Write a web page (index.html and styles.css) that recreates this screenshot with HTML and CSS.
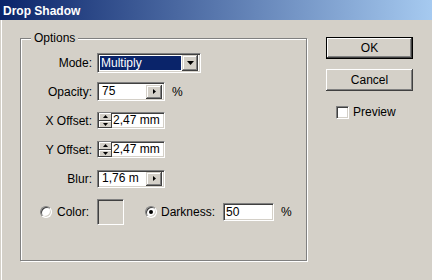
FILE: index.html
```html
<!DOCTYPE html>
<html lang="en">

<head>
    <meta charset="UTF-8">
    <meta name="viewport" content="width=device-width, initial-scale=1.0">
    <title>Drop Shadow</title>
    <link rel="stylesheet" href="styles.css">
</head>

<body>
    <div class="window">
        <div class="titlebar">Drop Shadow</div>
        <div class="content">
            <fieldset class="options">
                <legend>Options</legend>

                <div class="row">
                    <span class="lbl">Mode:</span>
                    <div class="field select">
                        <span class="select-value">Multiply</span>
                        <span class="raised drop-btn">
                            <svg width="7" height="4" viewBox="0 0 7 4"><polygon points="0,0 7,0 3.5,4" fill="#000"/></svg>
                        </span>
                    </div>
                </div>

                <div class="row">
                    <span class="lbl">Opacity:</span>
                    <div class="field arrow-field">
                        <span class="value">75</span>
                        <span class="raised side-btn">
                            <svg width="3" height="5" viewBox="0 0 3 5"><polygon points="0,0 3,2.5 0,5" fill="#000"/></svg>
                        </span>
                    </div>
                    <span class="unit">%</span>
                </div>

                <div class="row">
                    <span class="lbl">X Offset:</span>
                    <div class="field spin-field">
                        <span class="spin">
                            <span class="raised spin-btn"><svg width="5" height="3" viewBox="0 0 5 3"><polygon points="2.5,0 5,3 0,3" fill="#000"/></svg></span>
                            <span class="raised spin-btn"><svg width="5" height="3" viewBox="0 0 5 3"><polygon points="0,0 5,0 2.5,3" fill="#000"/></svg></span>
                        </span>
                        <span class="value">2,47 mm</span>
                    </div>
                </div>

                <div class="row">
                    <span class="lbl">Y Offset:</span>
                    <div class="field spin-field">
                        <span class="spin">
                            <span class="raised spin-btn"><svg width="5" height="3" viewBox="0 0 5 3"><polygon points="2.5,0 5,3 0,3" fill="#000"/></svg></span>
                            <span class="raised spin-btn"><svg width="5" height="3" viewBox="0 0 5 3"><polygon points="0,0 5,0 2.5,3" fill="#000"/></svg></span>
                        </span>
                        <span class="value">2,47 mm</span>
                    </div>
                </div>

                <div class="row">
                    <span class="lbl">Blur:</span>
                    <div class="field arrow-field blur">
                        <span class="value">1,76 m</span>
                        <span class="raised side-btn">
                            <svg width="3" height="5" viewBox="0 0 3 5"><polygon points="0,0 3,2.5 0,5" fill="#000"/></svg>
                        </span>
                    </div>
                </div>

                <div class="row color-row">
                    <span class="lbl radio-lbl"><span class="radio"></span>Color:</span>
                    <div class="field swatch"></div>
                    <span class="radio-lbl darkness"><span class="radio checked"></span>Darkness:</span>
                    <div class="field dark-field"><span class="value">50</span></div>
                    <span class="unit">%</span>
                </div>
            </fieldset>

            <div class="actions">
                <button class="push default">OK</button>
                <button class="push">Cancel</button>
                <label class="check"><span class="checkbox"></span>Preview</label>
            </div>
        </div>
    </div>
</body>

</html>
```

FILE: styles.css
```css
body {
    margin: 0;
    padding: 0;
    background-color: #d4d0c8;
    font-family: "Liberation Sans", Arial, sans-serif;
    font-size: 12px;
    color: #000;
}

.window {
    width: 432px;
    height: 280px;
    background-color: #d4d0c8;
    box-shadow: inset 1px 0 #d4d0c8, inset 2px 0 #fff;
    overflow: hidden;
}

.titlebar {
    box-sizing: border-box;
    height: 20px;
    padding: 3px 0 0 3px;
    line-height: 17px;
    font-weight: bold;
    color: #fff;
    background: linear-gradient(to right, #0a246a, #a6caf0);
}

.content {
    display: flex;
    align-items: flex-start;
    padding-left: 20px;
}

/* group box */
.options {
    box-sizing: border-box;
    width: 287px;
    height: 230px;
    margin: 11px 0 0 0;
    padding: 3px 0 0 0;
    border: 1px solid #808080;
    box-shadow: 1px 1px 0 #fff, inset 1px 1px 0 #fff;
    min-width: 0;
}

.options legend {
    margin-left: 10px;
    padding: 0 3px;
    line-height: 14px;
    background-color: #d4d0c8;
}

.row {
    display: flex;
    align-items: center;
    height: 29px;
}

.lbl {
    width: 71px;
    margin-right: 5px;
    text-align: right;
}

.unit {
    margin-left: 7px;
}

/* sunken field */
.field {
    box-sizing: border-box;
    background-color: #fff;
    border: 1px solid;
    border-color: #808080 #fff #fff #808080;
    box-shadow: inset 1px 1px #404040, inset -1px -1px #d4d0c8;
    display: flex;
    align-items: center;
}

.value {
    padding-left: 2px;
    line-height: 13px;
}

/* raised button */
.raised {
    box-sizing: border-box;
    display: flex;
    align-items: center;
    justify-content: center;
    background-color: #d4d0c8;
    box-shadow: inset -1px -1px #404040, inset 1px 1px #d4d0c8, inset -2px -2px #808080, inset 2px 2px #fff;
}

.select {
    width: 104px;
    height: 20px;
    padding: 2px;
    justify-content: space-between;
}

.select-value {
    flex: 1;
    height: 14px;
    line-height: 14px;
    padding-left: 1px;
    margin-right: 1px;
    color: #fff;
    background-color: #0a246a;
}

.drop-btn {
    width: 16px;
    height: 16px;
}

.arrow-field {
    width: 68px;
    height: 19px;
    padding: 2px;
    justify-content: space-between;
}

.arrow-field.blur {
    height: 18px;
}

.side-btn {
    width: 16px;
    height: 14px;
}

.spin-field {
    width: 68px;
    height: 17px;
    padding: 1px 2px 1px 1px;
}

.spin {
    display: flex;
    flex-direction: column;
    width: 13px;
    height: 15px;
    margin-right: 0;
}

.spin-btn {
    height: 7.5px;
    box-shadow: inset -1px -1px #404040, inset 1px 1px #fff;
}

.spin-field .value {
    padding-left: 1px;
}

/* color / darkness row */
.color-row {
    height: 38px;
}

.radio-lbl {
    display: flex;
    align-items: center;
    justify-content: flex-end;
    gap: 5px;
}

.color-row .lbl {
    width: 68px;
    margin-right: 8px;
}

.radio {
    box-sizing: border-box;
    width: 12px;
    height: 12px;
    border-radius: 50%;
    border: 1px solid;
    border-color: #808080 #fff #fff #808080;
    box-shadow: inset 1px 1px #404040, inset -1px -1px #d4d0c8;
    background-color: #fff;
    display: flex;
    align-items: center;
    justify-content: center;
}

.radio.checked::after {
    content: "";
    width: 4px;
    height: 4px;
    border-radius: 50%;
    background-color: #000;
}

.swatch {
    width: 27px;
    height: 26px;
    background-color: #d4d0c8;
}

.darkness {
    margin-left: 21px;
    gap: 4px;
}

.dark-field {
    width: 51px;
    height: 18px;
    margin-left: 8px;
}

/* buttons column */
.actions {
    display: flex;
    flex-direction: column;
    margin: 17px 0 0 19px;
}

.push {
    box-sizing: border-box;
    width: 87px;
    height: 22px;
    margin-bottom: 10px;
    padding: 0;
    border: none;
    font-family: inherit;
    font-size: 12px;
    color: #000;
    background-color: #d4d0c8;
    box-shadow: inset -1px -1px #404040, inset 1px 1px #fff, inset -2px -2px #808080, inset 2px 2px #d4d0c8;
}

.push.default {
    border: 1px solid #000;
}

.check {
    display: flex;
    align-items: center;
    gap: 4px;
    margin: 4px 0 0 10px;
}

.checkbox {
    box-sizing: border-box;
    width: 13px;
    height: 13px;
    background-color: #fff;
    border: 1px solid;
    border-color: #808080 #fff #fff #808080;
    box-shadow: inset 1px 1px #404040, inset -1px -1px #d4d0c8;
}
```
